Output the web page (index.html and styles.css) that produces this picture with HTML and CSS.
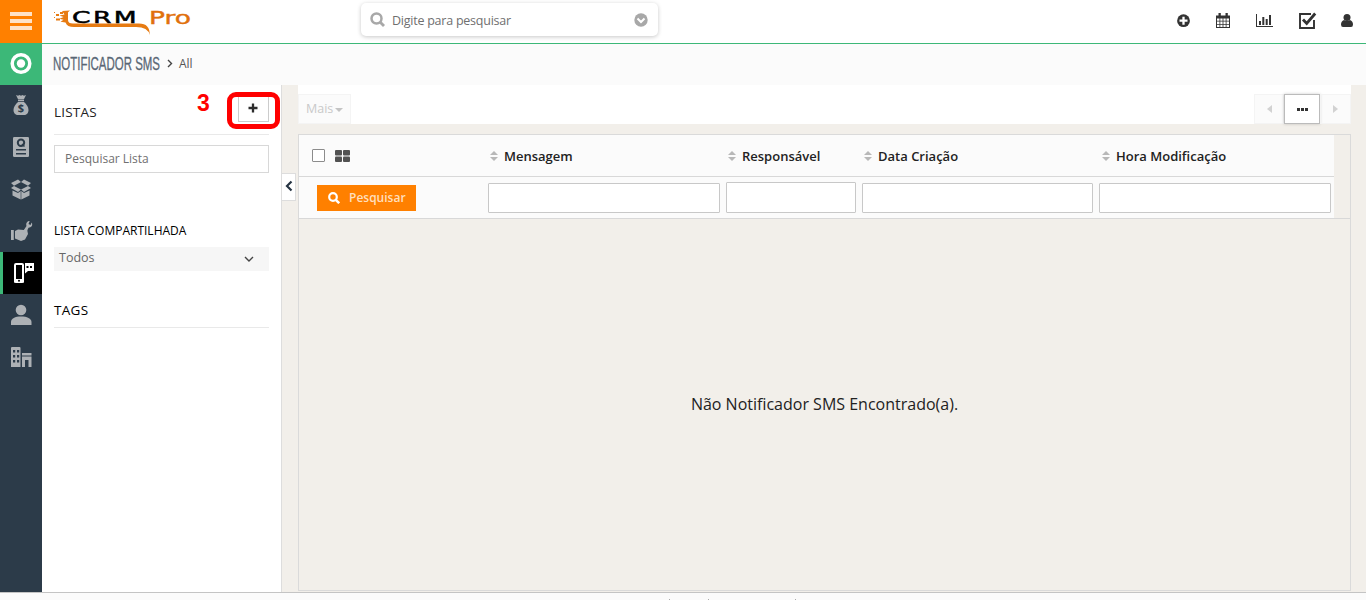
FILE: index.html
```html
<!DOCTYPE html>
<html lang="pt-BR">
<head>
<meta charset="utf-8">
<title>CRM Pro</title>
<link rel="stylesheet" href="styles.css">
</head>
<body>
<div class="app">
  <div class="shell">
    <nav class="rail">
      <a class="rail-item menu"><svg width="42" height="43"><path d="M10 14h22M10 21h22M10 28h22" stroke="#ffe2c6" stroke-width="4"/></svg></a>
      <a class="rail-item home"><svg width="42" height="41"><circle cx="21" cy="20.500" r="8.800" fill="none" stroke="#fff" stroke-width="3.500"/><circle cx="21" cy="20.500" r="4.200" fill="#fff"/></svg></a>
      <a class="rail-item"><svg width="42" height="42" fill="#adb1b5"><path d="M16 11l2 .8 1.500-.8 1.500.8 1.500-.8 1.500.8 2-.8-2.200 4.500h-5.600zM18 16h6v1.300h-6z"/><path d="M18 18h6c2.500 2 4.500 5 4.500 8 0 3-2 5-4.500 5h-6c-2.500 0-4.500-2-4.500-5 0-3 2-6 4.500-8z"/><text x="21" y="28" text-anchor="middle" class="money">$</text></svg></a>
      <a class="rail-item"><svg width="42" height="42"><rect x="13" y="11" width="16" height="20" rx="1.200" fill="#adb1b5"/><circle cx="21" cy="16.700" r="3.200" fill="none" stroke="#2c3b49" stroke-width="2"/><path d="M22 18l2.500 2.500" stroke="#2c3b49" stroke-width="1.500"/><path d="M16 23.800h10M16 27.800h10" stroke="#2c3b49" stroke-width="1.400"/></svg></a>
      <a class="rail-item"><svg width="42" height="42" fill="#adb1b5"><path d="M11 15l7-3.500 3 2.500-7 3.700zM31 15l-7-3.500-3 2.500 7 3.700zM11 20l3-2 7 3.500-3 2.500zM31 20l-3-2-7 3.500 3 2.500zM12.500 22.500l5.500 2.500 2.700-2v8.500l-8.200-4zM29.500 22.500l-5.500 2.500-2.700-2v8.500l8.200-4z"/></svg></a>
      <a class="rail-item"><svg width="42" height="42" fill="#adb1b5"><path d="M11 20h2.800v10H11zM15 21l3-1.500 6 .5 3-1 1 5-3 5.500-4 1.500-6-2.500z"/><path d="M22.500 22l4-6c-1-3 1-5 3.200-5l-1.200 3 2 1 1.200-2.500c1.500 3-.5 5.200-3.200 5.200L26 23z"/></svg></a>
      <a class="rail-item active"><svg width="42" height="42"><rect x="15" y="12" width="8" height="18" rx="1" fill="none" stroke="#fff" stroke-width="2"/><path d="M14 27h10v3.500H14zM25 11h9v8h-6l-3 2.500z" fill="#fff"/><circle cx="19" cy="28.800" r="1" fill="#000"/><path d="M26.500 14h2v2h-2zM30 14h2v2h-2z" fill="#000"/></svg></a>
      <a class="rail-item"><svg width="42" height="42" fill="#adb1b5"><circle cx="21" cy="16" r="5.300"/><path d="M11 31v-3c0-3.500 4-5.500 10-5.500s10.500 2 10.500 5.500v3z"/></svg></a>
      <a class="rail-item"><svg width="42" height="42"><path fill="#adb1b5" d="M11 12q0-1 1-1h7.500q1 0 1 1v19H11zM22 17h9.500v2.500H22zM22 20.500h9.500V31h-3v-7H25v7h-3z"/><path d="M13 14h2.200v2.500H13zM17 14h2.200v2.500H17zM13 19h2.200v2.500H13zM17 19h2.200v2.500H17zM13 24h2.200v2.500H13zM17 24h2.200v2.500H17z" fill="#2c3b49"/></svg></a>
    </nav>
    <div class="main">
      <header class="topbar">
        <svg class="logo" width="150" height="43">
          <path d="M20 11l8-.5-2 1.800v7.700q0 3.500 5 3.500h66q11 0 10.700 11.500-1.700-8-13.700-8H32q-7 0-8.500-4.500l-5-.8 3-2-4-1 4-1.700-4-1.500 5-1z" fill="#e77b12"/>
          <path d="M14 14h3v2h-3zM18 12h3v2h-3zM14 18.500h4v2h-4zM12 12h1v1h-1zM12 17h1v1h-1z" fill="#e77b12"/>
          <text x="30" y="23" textLength="67" lengthAdjust="spacingAndGlyphs" class="logo-crm">CRM</text>
          <text x="107" y="24" textLength="42" lengthAdjust="spacingAndGlyphs" class="logo-pro">Pro</text>
        </svg>
        <div class="search">
          <svg width="16" height="16"><circle cx="6.500" cy="6.500" r="5" fill="none" stroke="#a8a8a8" stroke-width="2.500"/><path d="M10 10l4 4" stroke="#a8a8a8" stroke-width="2.800"/></svg>
          <span>Digite para pesquisar</span>
          <svg width="14" height="14"><circle cx="7" cy="7" r="6.700" fill="#a8a8a8"/><path d="M3.500 5.500L7 9l3.500-3.500" fill="none" stroke="#fff" stroke-width="2"/></svg>
        </div>
        <svg class="actions" width="190" height="43" viewBox="1176 0 190 43" fill="#333">
          <circle cx="1183.500" cy="20.700" r="6.400"/><path d="M1183.500 16.700v8M1179.500 20.700h8" stroke="#fff" stroke-width="2.300"/>
          <path d="M1216 15.500h14V28h-14z"/><path d="M1218.500 13h2.300v3h-2.300zM1225.500 13h2.300v3h-2.300z"/><path d="M1217 18.500h2.500v2.300h-2.500zM1220.300 18.500h2.300v2.300h-2.300zM1223.400 18.500h2.300v2.300h-2.300zM1226.500 18.500h2.500v2.300h-2.500zM1217 21.600h2.500v2.300h-2.500zM1220.300 21.600h2.300v2.300h-2.300zM1223.400 21.600h2.300v2.300h-2.300zM1226.500 21.600h2.500v2.300h-2.500zM1217 24.700h2.500V27h-2.500zM1220.300 24.700h2.300V27h-2.300zM1223.400 24.700h2.300V27h-2.300zM1226.500 24.700h2.500V27h-2.500z" fill="#fff"/>
          <path d="M1256 14h1v12h16v1h-17zM1259 21h2v4h-2zM1262.300 17h2v8h-2zM1265.700 19h2v6h-2zM1269 15h2v10h-2z"/>
          <path d="M1311 14h-11v14h14v-8" fill="none" stroke="#333" stroke-width="1.900"/><path d="M1303 19.500l3.700 4 8.500-10" fill="none" stroke="#333" stroke-width="2.800"/>
          <circle cx="1347" cy="17.500" r="3.500"/><path d="M1344 20q3 2 6 0 3 1 3 4.500 0 2.500-2 2.500h-8q-2 0-2-2.500 0-3.500 3-4.500z"/>
        </svg>
      </header>
      <div class="crumbs">
        <div class="title-box"><span class="title">NOTIFICADOR SMS</span></div>
        <svg class="crumb-arrow" width="6" height="9"><path d="M1 1l3.500 3.500L1 8" fill="none" stroke="#444" stroke-width="1.400"/></svg>
        <span>All</span>
      </div>
      <div class="workspace">
        <aside class="sidebar">
          <div class="lists-head"><span>LISTAS</span><button class="add"><svg width="10" height="10"><path d="M5 .5v9M.5 5h9" stroke="#2c2c2c" stroke-width="2.300"/></svg></button></div>
          <div class="list-search">Pesquisar Lista</div>
          <div class="shared">LISTA COMPARTILHADA</div>
          <div class="select"><span>Todos</span><svg width="10" height="7"><path d="M1 1l4 4 4-4" fill="none" stroke="#444" stroke-width="1.400"/></svg></div>
          <div class="tags">TAGS</div>
          <b class="step">3</b><i class="highlight"></i>
        </aside>
        <div class="gutter"><div class="collapse"><svg width="8" height="12"><path d="M6.500 1.500L2 6l4.500 4.500" fill="none" stroke="#263442" stroke-width="2.200"/></svg></div></div>
        <section class="content">
          <div class="toolbar">
            <div class="more">Mais<svg width="8" height="4"><path d="M0 0h8L4 4z" fill="#c4c4c4"/></svg></div>
            <div class="pager">
              <span class="page-prev"><svg width="5" height="8"><path d="M5 0v8L0 4z" fill="#d2d2d2"/></svg></span>
              <span class="page-jump"><svg width="11" height="3"><path d="M0 0h3v3H0zM4 0h3v3H4zM8 0h3v3H8z" fill="#333"/></svg></span>
              <span class="page-next"><svg width="5" height="8"><path d="M0 0v8l5-4z" fill="#d2d2d2"/></svg></span>
            </div>
          </div>
          <div class="table">
            <div class="row head">
              <div class="tools"><i class="check"></i><svg width="15" height="12" fill="#515151"><rect width="7" height="5.500" rx="1"/><rect x="8" width="7" height="5.500" rx="1"/><rect y="6.500" width="7" height="5.500" rx="1"/><rect x="8" y="6.500" width="7" height="5.500" rx="1"/></svg></div>
              <div class="col"><svg width="8" height="10"><path d="M0 4h8L4 0zM0 6h8l-4 4z" fill="#b8b8b8"/></svg>Mensagem</div>
              <div class="col"><svg width="8" height="10"><path d="M0 4h8L4 0zM0 6h8l-4 4z" fill="#b8b8b8"/></svg>Responsável</div>
              <div class="col"><svg width="8" height="10"><path d="M0 4h8L4 0zM0 6h8l-4 4z" fill="#b8b8b8"/></svg>Data Criação</div>
              <div class="col"><svg width="8" height="10"><path d="M0 4h8L4 0zM0 6h8l-4 4z" fill="#b8b8b8"/></svg>Hora Modificação</div>
            </div>
            <div class="row filters">
              <div class="tools"><button class="find"><svg width="12" height="12"><circle cx="5" cy="5" r="3.800" fill="none" stroke="#fff" stroke-width="2.200"/><path d="M7.800 7.800l3.400 3.400" stroke="#fff" stroke-width="2.500"/></svg>Pesquisar</button></div>
              <div class="field"></div><div class="field owner"></div><div class="field"></div><div class="field"></div>
            </div>
            <div class="empty">Não Notificador SMS Encontrado(a).</div>
          </div>
        </section>
      </div>
    </div>
  </div>
  <footer class="footer"><i></i><i></i><i></i></footer>
</div>
</body>
</html>
```
FILE: styles.css
```css
* { box-sizing: border-box; }
body { margin: 0; font-family: "Open Sans", sans-serif; font-size: 13px; color: #222; }
svg { display: block; flex: none; }
button { padding: 0; font-family: inherit; border-radius: 0; }
.app { width: 1366px; height: 600px; overflow: hidden; }
.shell { display: flex; height: 592px; }
.rail { width: 42px; background: #2c3b49; }
.rail-item { display: block; height: 42px; }
.rail-item.menu { height: 43px; background: #ff8000; }
.rail-item.home { height: 41px; background: #3cb878; box-shadow: 0 1px #3cb878; }
.rail-item.active { background: #000; box-shadow: inset 3px 0 #3cb878; }
.money { font: bold 11px "Open Sans", sans-serif; fill: #2c3b49; }
.main { flex: 1; display: flex; flex-direction: column; background: #f2efea; }
.topbar { height: 44px; display: flex; background: #fff; border-bottom: 1px solid #3cb878; }
.logo-crm { font: 16.500px "DejaVu Sans", sans-serif; letter-spacing: 1.500px; fill: #000; stroke: #000; stroke-width: .5px; }
.logo-pro { font: 17.500px "DejaVu Sans", sans-serif; fill: #e0700c; stroke: #e0700c; stroke-width: .4px; }
.search { width: 297px; height: 33px; margin: 3px 0 0 169px; padding: 1px 10px 0 9px; display: flex; align-items: center; border-radius: 5px; box-shadow: 0 1px 4px rgba(0,0,0,.22); color: #6f6f6f; font-size: 12.500px; }
.search span { flex: 1; margin-left: 6px; letter-spacing: -.24px; }
.actions { margin-left: auto; }
.crumbs { height: 41px; padding: 0 0 2px 11px; background: #fbfbfb; display: flex; align-items: center; font-size: 12px; color: #555; }
.title-box { width: 108px; height: 24px; }
.title { display: inline-block; font: 18px/24px "Liberation Sans", sans-serif; color: #596775; -webkit-text-stroke: .3px #596775; white-space: nowrap; transform: scaleX(.637); transform-origin: 0 0; }
.crumb-arrow { margin: 0 6px; }
.workspace { flex: 1; display: flex; }
.sidebar { position: relative; width: 240px; padding: 0 12px; background: #fff; border-right: 1px solid #ddd; }
.lists-head { height: 50px; display: flex; align-items: center; justify-content: space-between; padding-top: 4px; border-bottom: 1px solid #e9e9e9; font-size: 13.500px; }
.lists-head span { letter-spacing: .2px; }
.add { width: 31px; height: 28px; margin-top: -8px; padding-right: 2px; display: flex; align-items: center; justify-content: center; background: #fff; border: 1px solid #ccc; }
.list-search { height: 28px; margin-top: 10px; padding: 0 10px; border: 1px solid #d8d8d8; line-height: 25px; font-size: 12px; color: #707070; }
.shared { margin-top: 48px; height: 26px; line-height: 19px; font-size: 12px; color: #000; }
.select { height: 24px; display: flex; align-items: center; justify-content: space-between; padding: 0 15px 3px 5px; background: #f6f6f6; font-size: 12.500px; color: #666; }
.select svg { margin-top: 4px; }
.tags { height: 36px; margin-top: 21px; line-height: 36px; font-size: 13.500px; letter-spacing: .3px; color: #000; border-bottom: 1px solid #e9e9e9; }
.step { position: absolute; left: 155px; top: 5px; font: bold 23px/26px "Liberation Sans", sans-serif; color: #f00; }
.highlight { position: absolute; left: 185px; top: 7px; width: 53px; height: 37px; border: 5px solid #f00; border-radius: 9px; }
.gutter { width: 16px; padding-top: 88px; }
.collapse { width: 14px; height: 28px; display: flex; align-items: center; justify-content: center; padding-bottom: 2px; background: #fff; border: 1px solid #ddd; border-left: 0; }
.content { width: 1053px; display: flex; flex-direction: column; }
.toolbar { height: 39px; display: flex; justify-content: space-between; align-items: flex-end; background: #fff; }
.more { width: 53px; height: 30px; display: flex; align-items: center; padding: 0 0 1px 7px; background: #fbfbfb; border: 1px solid #f4f4f4; color: #c9c9c9; font-size: 12.500px; }
.more svg { margin: 3px 0 0 2px; }
.pager { display: flex; height: 30px; background: #fbfbfb; }
.pager span { width: 30px; display: flex; align-items: center; justify-content: center; border: 1px solid #f4f4f4; }
.pager .page-next { width: 31px; }
.pager .page-jump { width: 36px; background: #fff; border: 1px solid #bbb; box-shadow: 0 0 3px rgba(0,0,0,.2); }
.table { flex: 1; display: flex; flex-direction: column; margin: 10px 0 1px; border: 1px solid #dadada; }
.row { width: 1035px; display: grid; background: #fbfbfb; }
.row.head { height: 42px; border-bottom: 1px solid #d8d8d8; grid-template-columns: 186px 238px 136px 238px 1fr; align-items: center; }
.row.filters { height: 41px; grid-template-columns: 183px 232px 130px 231px 232px; column-gap: 6px; }
.tools { display: flex; align-items: center; padding-left: 13px; }
.check { width: 13px; height: 13px; margin-right: 10px; background: #fff; border: 1px solid #8c8c8c; border-radius: 1px; }
.col { display: flex; align-items: center; padding: 1px 0 0 5px; font-size: 13px; font-weight: 600; }
.col svg { margin-right: 6px; }
.find { width: 99px; height: 26px; margin-left: 5px; display: flex; align-items: center; background: #ff8000; border: 0; padding: 0 0 1px 11px; color: #ffdfbd; font-weight: 600; font-size: 12px; }
.find svg { margin: 2px 9px 0 0; }
.field { height: 30px; margin-top: 6px; background: #fff; border: 1px solid #c8c8c8; border-radius: 1px; }
.field.owner { height: 31px; margin-top: 5px; }
.empty { flex: 1; display: flex; align-items: center; justify-content: center; padding-bottom: 2px; border-top: 1px solid #d8d8d8; font-size: 16px; }
.footer { height: 8px; display: flex; align-items: flex-end; gap: 38px; padding-left: 669px; background: #fbfbfb; border-top: 1px solid #c4c4c4; }
.footer i { width: 1px; height: 1px; background: #aaa; }
.footer i:last-child { margin-left: 48px; }
```
